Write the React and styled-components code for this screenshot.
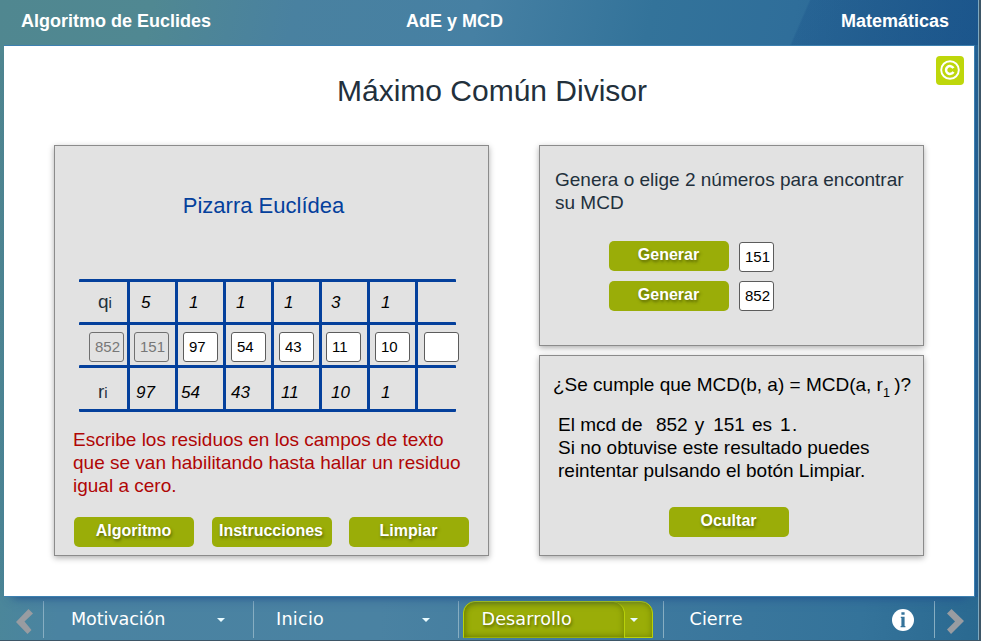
import React from 'react';
import styled, { createGlobalStyle, css } from 'styled-components';

const GlobalStyle = createGlobalStyle`
  *, *::before, *::after { box-sizing: border-box; }
  body { margin: 0; overflow: hidden; font-family: "Liberation Sans", Arial, sans-serif; }
`;

const Frame = styled.div`
  width: 981px;
  height: 641px;
  background: #3d5667;
  padding: 0 2px 1px 0;
`;

const Page = styled.div`
  height: 640px;
  display: grid;
  grid-template-rows: 45px 552px 43px;
  border-right: 1px solid #7fa9c0;
  border-bottom: 1px solid #7fa9b8;
  background:
    linear-gradient(to bottom, transparent 45px, rgba(60, 125, 160, 0.25) 640px),
    linear-gradient(102deg, #508790 0, #508892 150px, #4981a0 290px, #4680a3 470px, #33739a 640px, #2f6e9a 780px, #2a6795 860px, #1c588f 1080px);
`;

const Header = styled.header`
  display: grid;
  grid-template-columns: 385px auto 1fr;
  align-items: center;
  padding: 0 29px 3px 21px;
  color: #fff;
  font-size: 18px;
  font-weight: bold;
  line-height: 20px;
  background: linear-gradient(113.5deg, transparent 742px, rgba(12, 66, 128, 0.22) 744px, rgba(12, 66, 128, 0.35) 100%);
`;

const HeaderText = styled.span`
  text-align: ${(p) => p.$align || 'left'};
`;

const Sheet = styled.main`
  margin-left: 4px;
  width: 971px;
  background: #fff;
  border: solid #3d80b0;
  border-width: 1px 1px 1px 0;
  display: grid;
  grid-template-rows: 99px 411px;
  position: relative;
  box-shadow: 0 8px 10px -8px #1d4b8c;
`;

const Title = styled.h1`
  margin: 0;
  padding: 28px 0 0 6px;
  text-align: center;
  font-size: 30px;
  line-height: 34px;
  font-weight: normal;
  color: #22303c;
`;

const Copyright = styled.div`
  position: absolute;
  top: 10px;
  right: 10px;
  width: 28px;
  height: 29px;
  padding-bottom: 1px;
  border-radius: 4px;
  background: #bed70b;
  display: grid;
  place-items: center;
`;

const Panels = styled.div`
  display: grid;
  grid-template-columns: 435px 385px;
  column-gap: 50px;
  padding-left: 50px;
`;

const Stack = styled.div`
  display: grid;
  grid-template-rows: 201px 201px;
  row-gap: 9px;
`;

const Panel = styled.section`
  background: #e2e2e2;
  border: 1px solid #8b8b8b;
  box-shadow: 0 2px 6px rgba(0, 0, 0, 0.32);
`;

const BoardTitle = styled.h2`
  margin: 0;
  padding: 47px 16px 0 0;
  height: 133px;
  text-align: center;
  font-size: 22px;
  line-height: 26px;
  font-weight: normal;
  color: #04409c;
`;

const Board = styled.div`
  width: 377px;
  margin-left: 24px;
  display: grid;
  grid-template-rows: 43px 43px 47px;
`;

const BoardRow = styled.div`
  display: grid;
  grid-template-columns: repeat(7, 48px) 41px;
  border-top: 3px solid #04409c;
  border-radius: 1px;
  ${(p) => p.$last && css`border-bottom: 3px solid #04409c;`}
`;

const Cell = styled.div`
  display: flex;
  align-items: flex-start;
  padding: ${(p) => p.$top}px 0 0 ${(p) => p.$left}px;
  border-left: ${(p) => (p.$first ? '0' : '3px solid #04409c')};
  font-size: 17px;
  line-height: 20px;
  font-style: italic;
  color: #000;
`;

const RowLabel = styled.span`
  font-style: normal;
  font-size: 19px;
  color: #22303c;
  small { font-size: 15px; }
`;

const NumberField = styled.input`
  flex: none;
  width: 35px;
  height: 30px;
  margin: 0;
  padding: 0 0 1px 5px;
  border: 1px solid #5c5c5c;
  border-radius: 3px;
  background: #fff;
  font: 15px "Liberation Sans", Arial, sans-serif;
  color: #000;
  &:disabled { background: #e2e2e2; color: #777; border-color: #707070; }
`;

const Help = styled.p`
  margin: 0;
  padding: 16px 0 0 18px;
  font-size: 19px;
  line-height: 23px;
  color: #b00606;
`;

const Actions = styled.div`
  display: flex;
  gap: ${(p) => p.$gap || 0}px;
  padding: ${(p) => p.$pad};
`;

const Button = styled.button`
  flex: none;
  width: 120px;
  height: 30px;
  padding: 0 1px 2px 0;
  border: 0;
  border-radius: 5px;
  background: #9aad08;
  color: #fff;
  font: bold 16px/20px "Liberation Sans", Arial, sans-serif;
  text-shadow: 1px 2px 3px rgba(50, 60, 0, 0.6);
`;

const Prompt = styled.p`
  margin: 0;
  padding: 22px 0 0 15px;
  height: 95px;
  font-size: 19px;
  line-height: 23px;
  color: #22303c;
`;

const GenerateRow = styled.div`
  display: flex;
  gap: 10px;
  height: 40px;
  padding-left: 69px;
  ${NumberField} { margin-top: ${(p) => p.$drop}px; }
`;

const Question = styled.p`
  margin: 0;
  padding: 17px 0 0 13px;
  height: 57px;
  white-space: nowrap;
  font-size: 19px;
  line-height: 23px;
  color: #000;
  sub { margin-right: -1px; font-size: 12.6px; line-height: 0; vertical-align: -6px; }
`;

const Answer = styled.p`
  margin: 0;
  padding-left: 18px;
  font-size: 19px;
  line-height: 23px;
  white-space: pre;
  color: #000;
`;

const Value = styled.span`
  margin-left: ${(p) => p.$gap}px;
`;

const Nav = styled.nav`
  display: grid;
  grid-template-columns: 43px 210px 205px 205px 271px 1fr;
  padding-top: 4px;
  font-family: "DejaVu Sans", Verdana, sans-serif;
  font-size: 17.6px;
  color: #fff;
  background: linear-gradient(95deg, #4b869a 0, #4a83a1 60px, #4a82a2 380px, #3e799e 640px, #34739a 860px, #2a6990 100%);
`;

const NavCell = styled.div`
  display: flex;
  align-items: flex-start;
  height: 37px;
  border-left: ${(p) => (p.$first ? '0' : '1px solid #87aec2')};
  padding-left: ${(p) => p.$left || 0}px;
`;

const NavText = styled.span`
  width: ${(p) => p.$width}px;
  padding-top: 7px;
  line-height: 22px;
  letter-spacing: ${(p) => p.$tracking || 0}px;
`;

const Caret = styled.span`
  margin-top: 17px;
  border: 4px solid transparent;
  border-top-color: #e9fbff;
  border-bottom: 0;
`;

const ActiveTab = styled.div`
  display: flex;
  width: 190px;
  height: 37px;
  border: 1px solid #b8d10a;
  border-radius: 12px 12px 0 0;
  background: #9aad08;
  box-shadow: inset 0 0 6px #6f8200;
`;

const ActiveLabel = styled.div`
  width: 161px;
  height: 36px;
  padding: 6px 0 0 17.5px;
  line-height: 22px;
  letter-spacing: 0.1px;
  border-right: 1px solid #b8d10a;
  border-radius: 12px 12px 0 0;
  box-shadow: inset 0 0 6px #6f8200;
  text-shadow: 1px 2px 3px rgba(50, 60, 0, 0.6);
`;

const ActiveCaret = styled(Caret)`
  margin-top: 16px;
  margin-left: 5px;
`;

const NavIcon = styled.svg`
  display: block;
  margin: ${(p) => p.$margin};
`;

function Arrow({ flip, margin }) {
  return (
    <NavIcon $margin={margin} width="17" height="25" viewBox="0 0 17 25">
      <path
        d={flip ? 'M4.5 0 17 12 4 25 0 20.5 8 12.5 0 4.5Z' : 'M12.5 0 0 13 11.5 25 15.5 21 8.5 12.5 17 4.5Z'}
        fill="#999ca1"
      />
    </NavIcon>
  );
}

const columns = [
  { q: '5', qx: 11, field: '151', fx: 4, r: '97', rx: 6, disabled: true },
  { q: '1', qx: 11, field: '97', fx: 5, r: '54', rx: 3 },
  { q: '1', qx: 10, field: '54', fx: 5, r: '43', rx: 5 },
  { q: '1', qx: 10, field: '43', fx: 5, r: '11', rx: 7 },
  { q: '3', qx: 9, field: '11', fx: 4, r: '10', rx: 9 },
  { q: '1', qx: 11, field: '10', fx: 5, r: '1', rx: 11 },
  { q: '', qx: 10, field: '', fx: 6, r: '', rx: 10 },
];

function EuclidBoard() {
  return (
    <Board>
      <BoardRow>
        <Cell $first $top={10} $left={19}><RowLabel>q<small>i</small></RowLabel></Cell>
        {columns.map((c, i) => <Cell key={i} $top={11} $left={c.qx}>{c.q}</Cell>)}
      </BoardRow>
      <BoardRow>
        <Cell $first $top={7} $left={10}><NumberField disabled defaultValue="852" /></Cell>
        {columns.map((c, i) => (
          <Cell key={i} $top={7} $left={c.fx}>
            <NumberField disabled={c.disabled} defaultValue={c.field} />
          </Cell>
        ))}
      </BoardRow>
      <BoardRow $last>
        <Cell $first $top={14} $left={19}><RowLabel>r<small>i</small></RowLabel></Cell>
        {columns.map((c, i) => <Cell key={i} $top={15} $left={c.rx}>{c.r}</Cell>)}
      </BoardRow>
    </Board>
  );
}

export default function App() {
  return (
    <Frame>
      <GlobalStyle />
      <Page>
        <Header>
          <HeaderText>Algoritmo de Euclides</HeaderText>
          <HeaderText $align="center">AdE y MCD</HeaderText>
          <HeaderText $align="right">Matemáticas</HeaderText>
        </Header>
        <Sheet>
          <Title>Máximo Común Divisor</Title>
          <Copyright>
            <svg width="22" height="22" viewBox="0 0 22 22" fill="none" stroke="#fff">
              <circle cx="11" cy="11" r="8.8" strokeWidth="1.9" />
              <path d="M14.4 9.2A3.9 3.9 0 1 0 14.4 12.8" strokeWidth="2.5" />
            </svg>
          </Copyright>
          <Panels>
            <Panel>
              <BoardTitle>Pizarra Euclídea</BoardTitle>
              <EuclidBoard />
              <Help>
                Escribe los residuos en los campos de texto<br />
                que se van habilitando hasta hallar un residuo<br />
                igual a cero.
              </Help>
              <Actions $gap={17.5} $pad="20px 0 0 19px">
                <Button>Algoritmo</Button>
                <Button>Instrucciones</Button>
                <Button>Limpiar</Button>
              </Actions>
            </Panel>
            <Stack>
              <Panel>
                <Prompt>Genera o elige 2 números para encontrar<br />su MCD</Prompt>
                <GenerateRow $drop={1}>
                  <Button>Generar</Button>
                  <NumberField defaultValue="151" />
                </GenerateRow>
                <GenerateRow $drop={0}>
                  <Button>Generar</Button>
                  <NumberField defaultValue="852" />
                </GenerateRow>
              </Panel>
              <Panel>
                <Question>¿Se cumple que MCD(b, a) = MCD(a, r<sub>1</sub> )?</Question>
                <Answer>
                  El mcd de<Value $gap={13.5}>852</Value><Value $gap={7}>y</Value>
                  <Value $gap={9}>151</Value><Value $gap={7}>es</Value><Value $gap={8}>1</Value><Value $gap={1.5}>.</Value>
                </Answer>
                <Answer>Si no obtuvise este resultado puedes</Answer>
                <Answer>reintentar pulsando el botón Limpiar.</Answer>
                <Actions $pad="25px 0 0 129px"><Button>Ocultar</Button></Actions>
              </Panel>
            </Stack>
          </Panels>
        </Sheet>
        <Nav>
          <NavCell $first $left={16}><Arrow margin="8px 0 0" /></NavCell>
          <NavCell $left={27}><NavText $width={145.5} $tracking={-0.12}>Motivación</NavText><Caret /></NavCell>
          <NavCell $left={22}><NavText $width={145.5} $tracking={0.25}>Inicio</NavText><Caret /></NavCell>
          <NavCell $left={4}>
            <ActiveTab><ActiveLabel>Desarrollo</ActiveLabel><ActiveCaret /></ActiveTab>
          </NavCell>
          <NavCell $left={25.5}>
            <NavText $width={202.5} $tracking={0.1}>Cierre</NavText>
            <NavIcon $margin="8px 0 0" width="22" height="22" viewBox="0 0 22 22">
              <circle cx="11" cy="11" r="11" fill="#fff" />
              <path d="M9.4 3.2h3.2v2.6H9.4zM8.8 7.8h3.8V17h.8v1.2H8.6V17h.8V9h-.6z" fill="#35739a" />
            </NavIcon>
          </NavCell>
          <NavCell><Arrow flip margin="8px 0 0 12px" /></NavCell>
        </Nav>
      </Page>
    </Frame>
  );
}
